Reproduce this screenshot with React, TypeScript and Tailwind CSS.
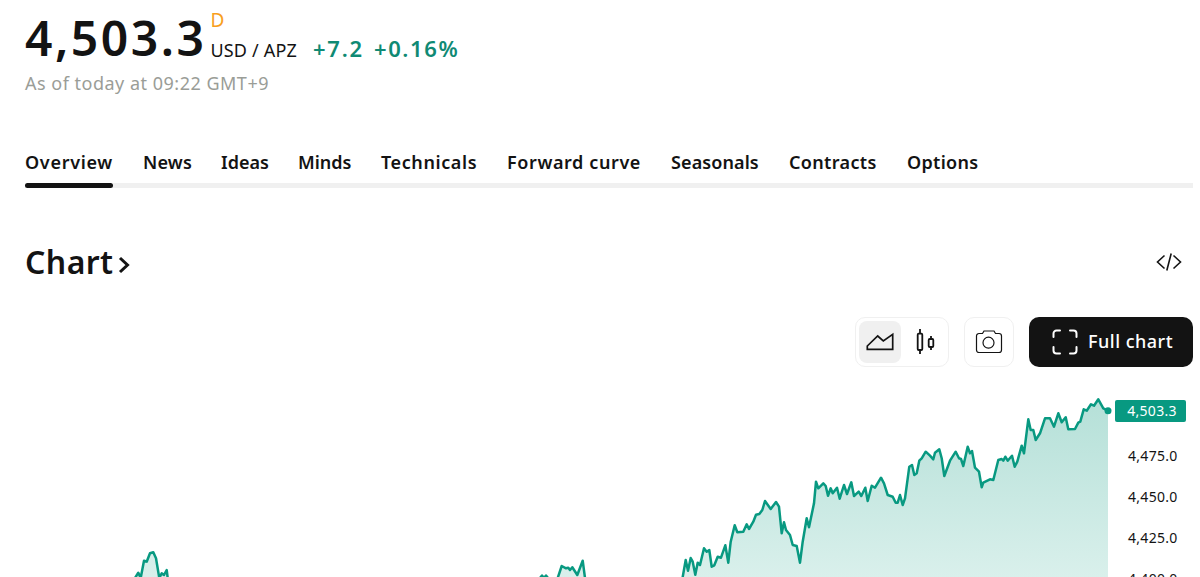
const tabs = [
  { label: "Overview", cls: "w-[88px] tracking-[0.7px]" },
  { label: "News", cls: "w-[48px] tracking-[0.2px]" },
  { label: "Ideas", cls: "w-[47px]" },
  { label: "Minds", cls: "w-[53px]" },
  { label: "Technicals", cls: "w-[96px] tracking-[0.6px]" },
  { label: "Forward curve", cls: "w-[134px] tracking-[0.6px]" },
  { label: "Seasonals", cls: "w-[88px] tracking-[0.1px]" },
  { label: "Contracts", cls: "w-[88px] tracking-[0.35px]" },
  { label: "Options", cls: "w-[71px] tracking-[0.3px]" },
];

const mainLine = "682.7,577 685.7,560 688,570.7 690.7,558 692.7,561.7 695.3,574.7 697.7,562.7 700,565 704,548.3 706.7,551.7 709.3,550 711.7,566.7 714.3,565.3 717.7,556.7 721,557.7 725.3,545.3 728.3,562.7 730.7,541.7 734.7,525.3 737.3,532.3 743.3,531.7 746.7,524.3 749,529 753.3,521.7 756,514.7 759.3,514 762.3,510 765,501 770.7,509 776,502 779,506.7 781.7,533.3 784,522.3 786,530 790,535 792.7,545 796.7,546 800,562.7 802.7,541.7 806.7,518.3 809,527.3 814,503.3 816,481.7 818.3,488.3 823.3,483.3 825.7,486 828,495.7 830.7,488.3 832.7,493.3 837,487.7 839.7,498.7 844,485 847,494 851.3,482.3 854,496 858.7,491.7 861.3,496 865.3,487.7 867.7,501 871.7,485.7 875,487.7 881,477.7 884,483.3 887.7,495 892.7,496.7 895.7,502.7 897.7,502.7 900,495 902.7,505 905,498.3 909.3,466.7 912,465 914.3,475 916.7,473.3 919.3,460.7 921.7,458.3 925.7,451.7 930,455.7 933.3,459.3 935,452.7 939.3,449.3 941.7,458.3 944.3,476 950,460.7 955.7,451.7 959,458.3 961,459 963.3,466 967.7,446.7 970,453.3 972,451 975,467.7 979,471.7 981.7,487.3 983.3,482.7 990,479.3 993.3,480 998.3,460 1001.7,459 1003.3,460.7 1005.3,456.7 1007.7,460.7 1012,455.7 1014.7,466.7 1017.3,461.7 1021.7,445.7 1024,453.3 1028.3,419.3 1030.7,430 1033.3,430 1035.7,440 1040,433.3 1045,418.3 1050,418.3 1054,426.7 1058.3,413.3 1061.7,422.3 1065.7,417.3 1068.3,429.3 1075,429 1078.3,422.7 1080.3,421.7 1083.7,409.3 1086.7,410.7 1091,404.3 1094,405.7 1098.3,399.3 1103.3,408.3 1108,410.7";
const leftBump = "135,578 138.3,572.7 140.7,578 144,560.7 146.7,561.7 150,553.3 153.3,552.3 156,558.3 159.3,578 161.7,573.3 164,575 166.7,570 167.7,578";
const midDots = "540,578 542,575.5 544,578 546,575.5 548,578";
const midBump = "557.7,578 561.7,566 566,568.3 568.3,567.7 570,570 572.3,567.3 577.3,575 582.7,560.7 585,578";

const closed = (pts: string) => {
  const first = pts.split(" ")[0].split(",")[0];
  const last = pts.split(" ").slice(-1)[0].split(",")[0];
  return `${pts} ${last},600 ${first},600`;
};

const ChartLine = ({ pts }: { pts: string }) => (
  <>
    <polygon points={closed(pts)} fill="url(#area)" />
    <polyline points={pts} fill="none" stroke="#089981" strokeWidth="2.5" strokeLinejoin="round" strokeLinecap="round" />
  </>
);

const App = () => {
  return (
    <div className="h-[577px] w-[1200px] overflow-hidden bg-white pl-[25px] pr-[7px] text-[#131313] font-['Noto_Sans','Open_Sans',sans-serif]">
      <div className="flex h-[73px] items-start">
        <span className="mt-[11px] text-[48px] leading-[54px] font-semibold tracking-[2.5px]">4,503.3</span>
        <div className="ml-[4px] flex flex-col">
          <span className="mt-[10px] text-[19px] leading-[20px] text-[#f89e1b]">D</span>
          <span className="mt-[10px] text-[18px] leading-[20px] tracking-[0.2px]">USD / APZ</span>
        </div>
        <span className="mt-[35px] ml-[16px] text-[22px] leading-[26px] font-semibold tracking-[1.8px] text-[#0f8a74]">+7.2</span>
        <span className="mt-[35px] ml-[10px] text-[22px] leading-[26px] font-semibold tracking-[1.6px] text-[#0f8a74]">+0.16%</span>
      </div>
      <div className="text-[18px] leading-[20px] tracking-[0.5px] text-[#9a9d97]">As of today at 09:22 GMT+9</div>

      <div className="mt-[55px] flex h-[40px] gap-[30px] border-b-[5px] border-[#f0f0f0] text-[18px] leading-[28px] font-semibold">
        {tabs.map((t, i) => (
          <div key={t.label} className={`relative shrink-0 whitespace-nowrap ${t.cls}`}>
            {t.label}
            {i === 0 && <div className="absolute right-0 bottom-[-5px] left-0 h-[5px] rounded-full bg-[#131313]" />}
          </div>
        ))}
      </div>

      <div className="mt-[54px] flex h-[40px] items-center justify-between">
        <div className="flex items-center text-[32px] leading-[40px] font-semibold tracking-[0.4px]">
          Chart
          <svg width="14" height="18" viewBox="0 0 14 18" className="mt-[6px] ml-[4px]" fill="none" stroke="#131313" strokeWidth="3">
            <path d="M3 2l7.500 7-7.500 7" />
          </svg>
        </div>
        <svg width="28" height="28" viewBox="0 0 28 28" className="mr-[10px]" fill="none" stroke="#131313" strokeWidth="1.6">
          <path d="M9.500 7.500L2.500 14l7 6.500M18.500 7.500l7 6.500-7 6.500M16.200 5.500l-4.400 17" />
        </svg>
      </div>

      <div className="mt-[35px] flex justify-end">
        <div className="flex h-[50px] w-[94px] items-center gap-[1px] rounded-[10px] border border-[#f0f0f0] p-[3px]">
          <div className="flex h-[42px] w-[42px] items-center justify-center rounded-[8px] bg-[#f0f0f0]">
            <svg width="28" height="28" viewBox="0 0 28 28" fill="none" stroke="#131313" strokeWidth="1.700">
              <path d="M1.300 21.300V18L11.700 8l5.600 5 9.400-6.700v15z" />
            </svg>
          </div>
          <div className="flex h-[42px] w-[42px] items-center justify-center">
            <svg width="28" height="28" viewBox="0 0 28 28" fill="none" stroke="#131313" strokeWidth="1.800">
              <path d="M11 1v5M11 22v4M22 8v3M22 19v3" />
              <rect x="8.700" y="5.700" width="4.600" height="16.300" rx="1" />
              <rect x="19.700" y="11" width="4.600" height="8" rx="1" />
            </svg>
          </div>
        </div>
        <div className="ml-[15px] flex h-[50px] w-[50px] items-center justify-center rounded-[10px] border border-[#f0f0f0]">
          <svg width="28" height="28" viewBox="0 0 28 28" fill="none" stroke="#131313" strokeWidth="1.200">
            <path d="M1.500 8a2.500 2.500 0 0 1 2.500-2.500h3.500L9 3h10l1.500 2.500H24A2.500 2.500 0 0 1 26.500 8v14a2.500 2.500 0 0 1-2.500 2.500H4A2.500 2.500 0 0 1 1.500 22z" />
            <circle cx="13.500" cy="14.700" r="5.500" />
          </svg>
        </div>
        <div className="ml-[15px] flex h-[50px] w-[164px] items-center rounded-[10px] bg-[#131313] pl-[22px] pb-[2px] text-[18px] font-medium tracking-[0.5px] text-white">
          <svg width="28" height="28" viewBox="0 0 28 28" fill="none" stroke="white" strokeWidth="2" strokeLinecap="round" className="mt-[2px] mr-[9px]">
            <path d="M9 2.500H5.500a3 3 0 0 0-3 3V9M19 2.500h3.500a3 3 0 0 1 3 3V9M9 25.500H5.500a3 3 0 0 1-3-3V19M19 25.500h3.500a3 3 0 0 0 3-3V19" />
          </svg>
          Full chart
        </div>
      </div>

      <div className="relative flex h-[210px]">
        <svg width="1083" height="210" viewBox="25 367 1083 210" className="shrink-0 overflow-visible">
          <defs>
            <linearGradient id="area" gradientUnits="userSpaceOnUse" x1="0" y1="400" x2="0" y2="600">
              <stop offset="0" stopColor="#b5e0d8" />
              <stop offset="1" stopColor="#def2ee" />
            </linearGradient>
          </defs>
          <ChartLine pts={leftBump} />
          <ChartLine pts={midDots} />
          <ChartLine pts={midBump} />
          <ChartLine pts={mainLine} />
          <circle cx="1108" cy="410.700" r="3.500" fill="#089981" />
        </svg>
        <div className="absolute top-[33px] left-[1090px] flex h-[22px] w-[71px] items-center justify-center rounded-[2px] bg-[#089981] pb-[2px] pl-[3px] text-[14px] tracking-[0.3px] text-white">4,503.3</div>
        <div className="ml-[20px] flex shrink-0 flex-col pt-[79px] text-[14px] leading-[20px] tracking-[0.3px]">
          <div className="h-[41px] shrink-0">4,475.0</div>
          <div className="h-[41px] shrink-0">4,450.0</div>
          <div className="h-[41px] shrink-0">4,425.0</div>
          <div className="h-[41px] shrink-0">4,400.0</div>
        </div>
      </div>
    </div>
  );
};

export default App;
